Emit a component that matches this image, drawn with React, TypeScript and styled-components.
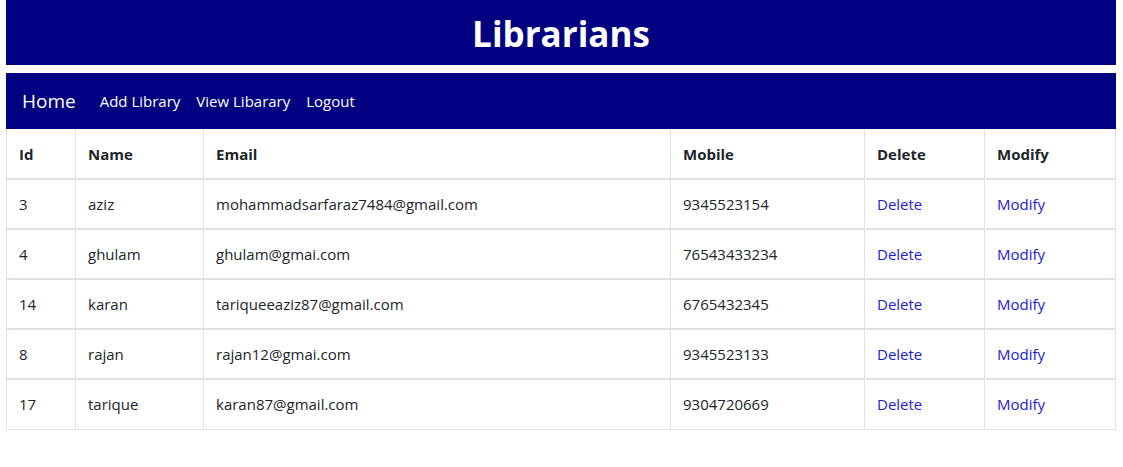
import React from "react";
import styled, { createGlobalStyle } from "styled-components";

const Global = createGlobalStyle`
  html, body { margin: 0; padding: 0; background: #fff; }
  body {
    font-family: "Segoe UI", "Open Sans", "Noto Sans", Arial, sans-serif;
    font-size: 16px;
    color: #212529;
  }
  * { box-sizing: border-box; }
`;

const Page = styled.div`
  width: 1110px;
  margin-left: 6px;
`;

const Banner = styled.h1`
  margin: 0 0 8px;
  height: 65px;
  background: #000080;
  color: #fff;
  font-size: 35px;
  font-weight: 700;
  display: flex;
  align-items: center;
  justify-content: center;
  padding-top: 2px;
`;

const NavBar = styled.nav`
  height: 56px;
  background: #000080;
  display: flex;
  align-items: center;
  padding: 0 16px;
`;

const Brand = styled.a`
  color: #fff;
  font-size: 19px;
  margin-right: 16px;
  text-decoration: none;
`;

const NavLink = styled.a`
  color: #fff;
  font-size: 15px;
  padding: 0 8px;
  text-decoration: none;
`;

const Table = styled.table`
  width: 1109px;
  border-collapse: collapse;
  table-layout: fixed;
`;

const Th = styled.th`
  text-align: left;
  font-weight: 700;
  font-size: 15px;
  height: 50px;
  padding: 0 12px;
  border: 1px solid #dee2e6;
  border-top: none;
  border-bottom-width: 2px;
`;

const Td = styled.td`
  font-size: 15px;
  height: 50px;
  padding: 0 12px;
  border: 1px solid #dee2e6;
  border-top-width: 2px;
`;

const ActionLink = styled.a`
  color: #1c1cd0;
  text-decoration: none;
`;

const cols = [69, 128, 467, 194, 120, 131];
const heads = ["Id", "Name", "Email", "Mobile", "Delete", "Modify"];
const rows = [
  ["3", "aziz", "mohammadsarfaraz7484@gmail.com", "9345523154"],
  ["4", "ghulam", "ghulam@gmai.com", "76543433234"],
  ["14", "karan", "tariqueeaziz87@gmail.com", "6765432345"],
  ["8", "rajan", "rajan12@gmai.com", "9345523133"],
  ["17", "tarique", "karan87@gmail.com", "9304720669"],
];

export default function App() {
  return (
    <>
      <Global />
      <Page>
        <Banner>Librarians</Banner>
        <NavBar>
          <Brand href="#">Home</Brand>
          <NavLink href="#">Add Library</NavLink>
          <NavLink href="#">View Libarary</NavLink>
          <NavLink href="#">Logout</NavLink>
        </NavBar>
        <Table>
          <colgroup>
            {cols.map((w, i) => (
              <col key={i} style={{ width: w }} />
            ))}
          </colgroup>
          <thead>
            <tr>
              {heads.map((h) => (
                <Th key={h}>{h}</Th>
              ))}
            </tr>
          </thead>
          <tbody>
            {rows.map((r) => (
              <tr key={r[0]}>
                {r.map((c, i) => (
                  <Td key={i}>{c}</Td>
                ))}
                <Td>
                  <ActionLink href="#">Delete</ActionLink>
                </Td>
                <Td>
                  <ActionLink href="#">Modify</ActionLink>
                </Td>
              </tr>
            ))}
          </tbody>
        </Table>
      </Page>
    </>
  );
}
